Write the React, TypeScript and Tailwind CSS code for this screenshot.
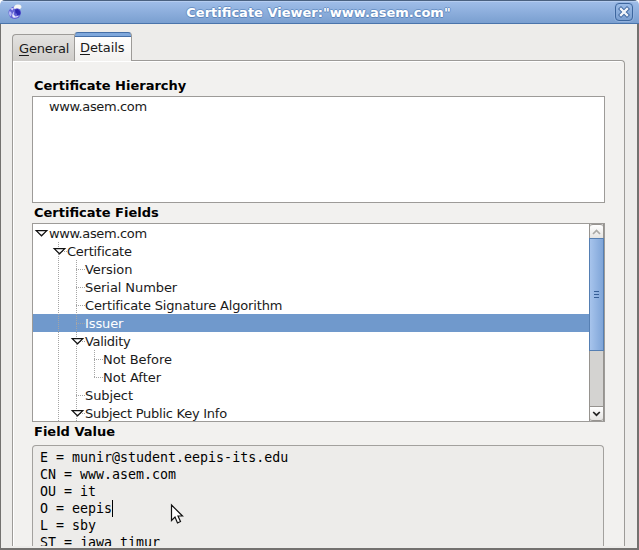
import React from "react";

type Line = "none" | "full" | "half";

interface TreeRow {
  label: string;
  lines: Line[];
  open?: boolean;
  selected?: boolean;
  tracking?: string;
}

const rows: TreeRow[] = [
  { label: "www.asem.com", lines: [], open: true, tracking: "tracking-[-0.37px]" },
  { label: "Certificate", lines: ["full"], open: true, tracking: "tracking-[-0.26px]" },
  { label: "Version", lines: ["full", "full"], tracking: "tracking-[-0.05px]" },
  { label: "Serial Number", lines: ["full", "full"], tracking: "tracking-[-0.08px]" },
  { label: "Certificate Signature Algorithm", lines: ["full", "full"], tracking: "tracking-[-0.16px]" },
  { label: "Issuer", lines: ["full", "full"], selected: true, tracking: "tracking-[-0.1px]" },
  { label: "Validity", lines: ["full", "full"], open: true, tracking: "tracking-[-0.3px]" },
  { label: "Not Before", lines: ["full", "full", "full"], tracking: "tracking-[-0.05px]" },
  { label: "Not After", lines: ["full", "full", "half"] },
  { label: "Subject", lines: ["full", "full"], tracking: "tracking-[-0.1px]" },
  { label: "Subject Public Key Info", lines: ["full", "full"], open: true, tracking: "tracking-[-0.25px]" },
];

const fieldValue = [
  "E = munir@student.eepis-its.edu",
  "CN = www.asem.com",
  "OU = it",
  "O = eepis",
  "L = sby",
  "ST = jawa timur",
];

function Twisty() {
  return <path d="M5.2 6.6H15.8L10.5 11.8Z" fill="#fff" stroke="#111" strokeWidth="1.2" />;
}

function Guide({ line, last, open }: { line: Line; last: boolean; open?: boolean }) {
  return (
    <svg width="18" height="18" className="shrink-0" fill="none">
      {line !== "none" && (
        <path d={line === "full" ? "M9.5 0V18" : "M9.5 0V10"} stroke="#a5a5a5" strokeDasharray="1 1" />
      )}
      {last && <path d="M9 9.5H18" stroke="#a5a5a5" strokeDasharray="1 1" />}
      {last && open && <Twisty />}
    </svg>
  );
}

function Row({ row }: { row: TreeRow }) {
  return (
    <div className={"flex h-[18px] shrink-0 items-center whitespace-nowrap " + (row.selected ? "bg-[#7099cc] text-white" : "")}>
      <svg width="16" height="18" className="shrink-0" fill="none">
        {row.lines.length === 0 && (
          <g transform="translate(-2 0)">
            <Twisty />
          </g>
        )}
      </svg>
      {row.lines.map((l, i) => (
        <Guide key={i} line={l} last={i === row.lines.length - 1} open={row.open} />
      ))}
      <span className={"pt-[2px] leading-[18px] " + (row.tracking ?? "")}>{row.label}</span>
    </div>
  );
}

function ScrollBar() {
  return (
    <div className="flex w-[15px] shrink-0 flex-col border-x border-[#96938f] bg-[#d4d3d1]">
      <div className="flex h-[14px] items-center justify-center rounded-t-[3px] border-t border-[#96938f] bg-linear-to-b from-white to-[#e5e4e2]">
        <svg width="9" height="6" fill="none" stroke="#aaa9a6" strokeWidth="1.7">
          <path d="M1 5L4.5 1.5L8 5" />
        </svg>
      </div>
      <div className="-mx-px flex h-[113px] flex-col items-center justify-center gap-[2px] border border-[#557fb3] bg-linear-to-r from-[#a7c4ec] to-[#7fa5d8]">
        <i className="h-px w-[5px] bg-[#365f97]" />
        <i className="h-px w-[5px] bg-[#365f97]" />
        <i className="h-px w-[5px] bg-[#365f97]" />
      </div>
      <div className="flex-1" />
      <div className="flex h-[15px] items-center justify-center rounded-b-[3px] border-y border-[#96938f] bg-linear-to-b from-white to-[#e5e4e2]">
        <svg width="9" height="6" fill="none" stroke="#222" strokeWidth="1.7">
          <path d="M1.2 1L4.5 4.2L7.8 1" />
        </svg>
      </div>
    </div>
  );
}

function TitleBar() {
  return (
    <header className="flex h-6 shrink-0 items-center border-t border-b border-t-[#4a6180] border-b-[#4a74ab] bg-linear-to-b from-[#a0bee9] to-[#7a9fd0] pr-[6px] pl-[7px] shadow-[inset_0_1px_0_#b5cdf0]">
      <svg width="16" height="16" viewBox="0 0 16 16" className="shrink-0">
        <circle cx="7.7" cy="8.8" r="6.2" fill="#6464d6" />
        <path d="M9.5 4.5Q14 6 13.5 10Q12 12 10 11Z" fill="#2f2bb4" />
        <path d="M2.5 7Q1 10 3.5 12.5Q5.5 10 4 8Z" fill="#b5b6f5" />
        <path d="M7 7.5L6.5 10.5L8.5 12.5L12 11.8Q10 14.2 6 13.5Q4 11 7 7.5Z" fill="#e8e9fd" />
        <path d="M8 5.5H10.5V9.5H8.5Z" fill="#2c27ae" />
        <path d="M7.5 2Q9 0 13 .8Q16 3 13 5L10 4.2L7.5 5Q6 3.5 7.5 2Z" fill="#f6f6f4" />
        <path d="M3 4.5L7 3.8L5.5 6.5Z" fill="#d0d0fb" />
      </svg>
      <h1 className="flex-1 pt-[2px] pr-[1px] text-center text-[13px] leading-[20px] font-bold text-white [text-shadow:1px_0_#6b92c6,-1px_0_#6b92c6,0_1px_#5c84ba,0_-1px_#6b92c6]">
        Certificate Viewer:"www.asem.com"
      </h1>
      <button className="flex h-[18px] w-[18px] items-center justify-center rounded-[4px] border border-[#3d669e] bg-linear-to-b from-[#9abbe7] to-[#7b9fd0] shadow-[0_0_0_1px_#94b3df]">
        <svg width="12" height="12" fill="none" strokeLinecap="square">
          <path d="M3 3L9 9M9 3L3 9" stroke="#3c659f" strokeWidth="4.2" />
          <path d="M3 3L9 9M9 3L3 9" stroke="#f2f5fa" strokeWidth="2.4" />
        </svg>
      </button>
    </header>
  );
}

function Heading({ children, className }: { children: React.ReactNode; className: string }) {
  return <h2 className={"shrink-0 pl-[2px] text-[13px] leading-[18px] font-bold text-black " + className}>{children}</h2>;
}

export default function App() {
  return (
    <div className="relative flex h-[550px] w-[639px] flex-col overflow-hidden rounded-t-[5px] bg-[#edecea] font-['DejaVu_Sans',sans-serif] text-[13px] text-[#1a1a1a]">
      <TitleBar />
      <main className="flex min-h-0 flex-1 flex-col border-r-2 border-b-2 border-l border-[#73716f] pt-2 pr-[12px] pb-[2px] pl-[11px]">
        <nav className="relative z-10 flex h-[29px] shrink-0 items-end">
          <div className="h-[27px] w-[62px] rounded-tl-[4px] border-t border-l border-[#9d9b98] bg-linear-to-b from-[#e3e2e0] to-[#cfcdca] pl-[6px] leading-[27px] tracking-[-0.15px]">
            <span className="underline underline-offset-2 decoration-1">G</span>eneral
          </div>
          <div className="h-[29px] w-[58px] rounded-t-[4px] border-x border-t border-x-[#9d9b98] border-t-[#456fa7] bg-[linear-gradient(#7fa8dc_0_3px,#456fa7_3px_4px,#fff_4px,#f2f1ef)] pl-[5px] leading-[30px] tracking-[-0.1px]">
            <span className="underline underline-offset-2 decoration-1">D</span>etails
          </div>
        </nav>
        <section className="-mt-px flex min-h-0 flex-1 flex-col overflow-hidden rounded-tr-[4px] border-x border-t border-[#9d9b98] bg-[#f2f1ef] px-[19px] shadow-[inset_1px_1px_#fff]">
          <Heading className="mt-4 mb-[1px]">Certificate Hierarchy</Heading>
          <div className="h-[107px] shrink-0 border border-[#9d9b98] bg-white pt-[1px] pl-4 leading-[18px] tracking-[-0.37px]">
            www.asem.com
          </div>
          <Heading className="mt-[1px] mb-[1px]">Certificate Fields</Heading>
          <div className="flex h-[199px] shrink-0 border border-[#9d9b98] bg-white">
            <div className="flex min-w-0 flex-1 flex-col overflow-hidden">
              {rows.map((r) => (
                <Row key={r.label} row={r} />
              ))}
            </div>
            <ScrollBar />
          </div>
          <Heading className="mt-[1px] mb-[4px]">Field Value</Heading>
          <div className="mr-px min-h-0 flex-1 overflow-hidden rounded-t-[4px] border-x border-t border-[#a3a19e] bg-[#edecea] pt-[3px] pl-[7px] font-['DejaVu_Sans_Mono',monospace] text-[13.3px] leading-[17px] whitespace-pre text-black">
            {fieldValue.map((line, i) => (
              <div key={line} className="flex h-[17px] items-center">
                {line}
                {i === 3 && <i className="h-[17px] w-px bg-black" />}
              </div>
            ))}
          </div>
        </section>
      </main>
      <svg className="absolute top-[502px] left-[169px]" width="17" height="23" viewBox="0 0 17 23">
        <path d="M2.5 3V18.5L6 15L8.5 21L11.5 19.5L9 14H13.5Z" fill="#fff" stroke="#111" strokeWidth="1.2" />
      </svg>
    </div>
  );
}
